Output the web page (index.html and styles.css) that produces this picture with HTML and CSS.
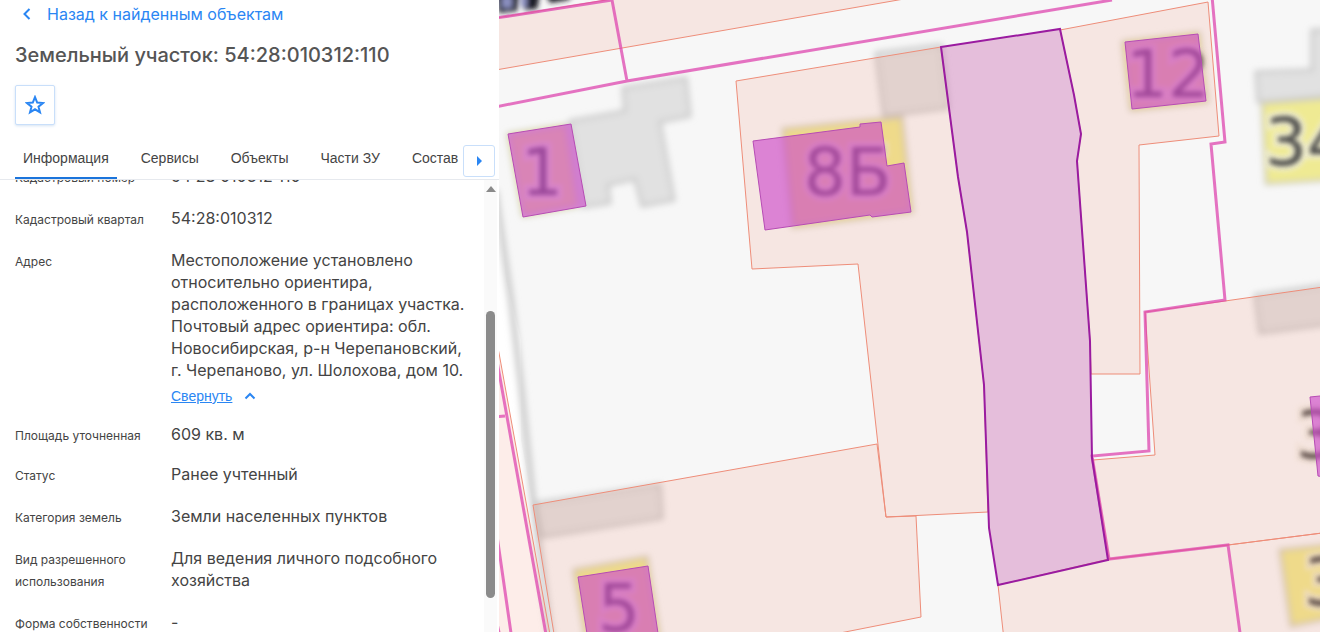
FILE: index.html
```html
<!DOCTYPE html>
<html lang="ru">
<head>
<meta charset="utf-8">
<meta name="viewport" content="width=device-width, initial-scale=1">
<title>Земельный участок: 54:28:010312:110</title>
<link rel="stylesheet" href="styles.css">
</head>
<body>
<div class="layout">
  <aside class="panel">
    <header class="panel-head">
      <a class="back" href="#results">
        <svg class="back-icon" viewBox="0 0 10 12" aria-hidden="true"><path d="M7.500 1 2.500 6 7.500 11"/></svg>
        Назад к найденным объектам
      </a>
      <h1 class="title">Земельный участок: 54:28:010312:110</h1>
      <button class="icon-button favorite" type="button" aria-label="В избранное">
        <svg class="star" viewBox="0 0 20 20" aria-hidden="true"><path d="M10 2.1 12.2 7.6 18 8 13.5 11.7 15 17.4 10 14.3 5 17.4 6.5 11.7 2 8 7.8 7.6Z"/></svg>
      </button>
    </header>
    <nav class="tabs">
      <button class="tab active" type="button">Информация</button>
      <button class="tab" type="button">Сервисы</button>
      <button class="tab" type="button">Объекты</button>
      <button class="tab" type="button">Части ЗУ</button>
      <button class="tab last" type="button">Состав</button>
      <button class="icon-button next" type="button" aria-label="Следующие вкладки">
        <svg class="next-icon" viewBox="0 0 6 10" aria-hidden="true"><path d="M1 0 6 5 1 10Z"/></svg>
      </button>
    </nav>
    <div class="scroll">
      <dl class="facts">
        <div class="fact"><dt>Кадастровый номер</dt><dd>54:28:010312:110</dd></div>
        <div class="fact"><dt>Кадастровый квартал</dt><dd>54:28:010312</dd></div>
        <div class="fact tight"><dt>Адрес</dt><dd>Местоположение установлено относительно ориентира, расположенного в границах участка. Почтовый адрес ориентира: обл. Новосибирская, р-н Черепановский, г. Черепаново, ул. Шолохова, дом 10.
          <a class="collapse" href="#address"><span>Свернуть</span><svg class="collapse-icon" viewBox="0 0 12 8" aria-hidden="true"><path d="M1.5 6.5 6 2 10.5 6.5"/></svg></a></dd></div>
        <div class="fact tight"><dt>Площадь уточненная</dt><dd>609 кв. м</dd></div>
        <div class="fact"><dt>Статус</dt><dd>Ранее учтенный</dd></div>
        <div class="fact"><dt>Категория земель</dt><dd>Земли населенных пунктов</dd></div>
        <div class="fact"><dt>Вид разрешенного использования</dt><dd>Для ведения личного подсобного хозяйства</dd></div>
        <div class="fact"><dt>Форма собственности</dt><dd>-</dd></div>
      </dl>
      <div class="scrollbar" aria-hidden="true">
        <svg class="scroll-up" viewBox="0 0 10 6"><path d="M0 6 5 0 10 6Z"/></svg>
        <div class="scroll-before"></div>
        <div class="scroll-thumb"></div>
        <div class="scroll-after"></div>
      </div>
    </div>
  </aside>
  <main class="map">
    <svg class="map-canvas" viewBox="499 0 821 632" preserveAspectRatio="xMinYMin slice" role="img" aria-label="Кадастровая карта">
      <defs>
        <filter id="soft" x="-20%" y="-20%" width="140%" height="140%"><feGaussianBlur stdDeviation="3"/></filter>
        <filter id="soft-text" x="-20%" y="-20%" width="140%" height="140%"><feGaussianBlur stdDeviation="2.4"/></filter>
      </defs>
      <path class="verge" d="M499 200 506 280 521 340V440L533 505 553 632H499Z"/>
      <g filter="url(#soft)">
        <path class="road-edge" d="M495 190 511 300 521 385 533 500 551 640"/>
        <path class="grey" d="M570 121 625 111 623 88 686 78 690 116 660 122 674 200 642 206 635 179 608 185 610 203 583 207Z"/>
        <path class="grey" d="M876 53 941 45 948 108 884 116Z"/>
        <path class="grey" d="M536 503 660 485 662 518 542 537Z"/>
        <path class="grey" d="M1256 72 1312 70 1312 30 1330 30 1330 96 1258 102Z"/>
        <path class="grey" d="M1255 295 1330 284 1330 324 1260 333Z"/>
        <path class="yellow" d="M508 134 566 125 578 206 523 216Z"/>
        <path class="yellow" d="M783 129 902 117 912 212 793 227Z"/>
        <path class="yellow" d="M1123 42 1199 33 1207 102 1131 110Z"/>
        <path class="yellow" d="M1262 103 1330 98 1330 180 1266 184Z"/>
        <path class="yellow" d="M574 570 647 557 660 640 586 640Z"/>
        <path class="yellow" d="M1280 550 1330 545 1330 618 1291 626Z"/>
      </g>
      <g filter="url(#soft-text)">
        <path class="shade" d="M496-6H519L517 11 499 13ZM523-6H540L537 9 524 10Z"/>
        <path class="glint" d="M502-4H512V8H502ZM521-4H527V7H521Z"/>
        <path class="shade" d="M546-6H574L568 0 550 3Z"/>
      </g>
      <g class="halo" filter="url(#soft-text)">
        <text x="521" y="195">1</text><text x="804" y="195">8Б</text><text x="1126" y="97">12</text>
        <text x="1265" y="165">34</text><text x="598" y="631">5</text><text x="1296" y="458">3</text><text x="1304" y="605">3</text>
      </g>
      <g class="numbers" filter="url(#soft-text)">
        <text x="521" y="195">1</text><text x="804" y="195">8Б</text><text x="1126" y="97">12</text>
        <text x="1265" y="165">34</text><text x="598" y="631">5</text><text x="1296" y="458">3</text><text x="1304" y="605">3</text>
      </g>
      <g class="parcels">
        <path d="M490 19 612-1H904L490 71Z"/>
        <path d="M736 81 941 47 958 177 967 232 984 385 988 512 886 517 858 264 752 269Z"/>
        <path d="M1060 30 1208 2 1219 136 1139 145 1140 374 1091 374 1090 341 1077 161 1081 134 1074 95Z"/>
        <path d="M1145 312 1225 301 1330 286V532L1228 545 1109 559 1093 460 1155 455Z"/>
        <path d="M998 585 1109 559 1228 545 1330 532V640H1004Z"/>
        <path d="M533 505 877 444 886 517 916 516 921 617 840 633 824 640H555Z"/>
        <path d="M490 310 499 353 551 640H490Z"/>
      </g>
      <g class="blocks">
        <path d="M490 19 612 0 627 81M490 108 627 81 1112 0"/>
        <path d="M1212-4 1225 142 1211 144 1225 300 1145 312 1149 451 1092 456 1109 559 1228 545 1241 640"/>
        <path d="M490 322 547 640M490 487 512 640M494 417 505 416M494 610 503 650"/>
      </g>
      <g class="buildings">
        <path d="M508 134 571 124 586 206 523 217Z"/>
        <path d="M753 141 860 127 860 124 881 122 887 166 904 163 911 212 872 217 870 215 765 230Z"/>
        <path d="M1125 42 1198 34 1206 101 1132 109Z"/>
        <path d="M578 577 648 566 659 640H588Z"/>
        <path d="M1310 397 1330 395V478L1318 476Z"/>
      </g>
      <path class="selected" d="M941 47 1060 29 1074 95 1081 134 1077 161 1090 341 1092 458 1108 560 998 585 989 528 984 385 967 232 958 177Z"/>
    </svg>
  </main>
</div>
</body>
</html>
```
FILE: styles.css
```css
* { box-sizing: border-box; }

body {
  margin: 0;
  font-family: Inter, "Noto Sans", sans-serif;
  color: #444;
  background: #fff;
}

.layout {
  display: grid;
  grid-template-columns: minmax(320px, 499px) minmax(0, 1fr);
  height: 100vh;
  overflow: hidden;
}

.panel {
  display: flex;
  flex-direction: column;
  min-height: 0;
  min-width: 0;
}

.panel-head {
  display: flex;
  flex-direction: column;
  align-items: flex-start;
  padding: 4px 15px 0;
}

.back {
  display: flex;
  align-items: center;
  gap: 15px;
  padding-left: 7px;
  font-size: 16px;
  line-height: 20px;
  color: #2a86f3;
  text-decoration: none;
}

.back-icon {
  width: 10px;
  height: 12px;
  fill: none;
  stroke: currentColor;
  stroke-width: 2;
}

.title {
  margin: 17px 0 16px;
  font-size: 20px;
  line-height: 28px;
  font-weight: 500;
  color: #555;
}

button {
  margin: 0;
  padding: 0;
  border: 0;
  background: none;
  font: inherit;
  color: inherit;
}

.icon-button {
  display: flex;
  align-items: center;
  justify-content: center;
  background: #fff;
  border: 1px solid #c9dffa;
  border-radius: 2px;
}

.favorite {
  width: 40px;
  height: 40px;
  box-shadow: 0 1px 3px #d5e3f3;
}

.star {
  width: 20px;
  height: 20px;
  fill: none;
  stroke: #2a86f3;
  stroke-width: 2;
}

.tabs {
  display: flex;
  align-items: center;
  height: 55px;
  padding: 0 4px 0 15px;
  border-bottom: 1px solid #e6e9ee;
}

.tab {
  flex: none;
  height: 54px;
  margin-right: 16px;
  padding: 14px 8px 0;
  font-family: "Liberation Sans", Arial, sans-serif;
  font-size: 14px;
  line-height: 20px;
  border-bottom: 2px solid transparent;
}

.tab.last {
  margin-right: 0;
  padding-right: 0;
}

.tab.active { border-bottom-color: #1b74db; }

.next {
  flex: none;
  width: 32px;
  height: 32px;
  margin-left: auto;
  margin-top: 18px;
  border-radius: 3px;
}

.next-icon {
  width: 6px;
  height: 10px;
  fill: #2a86f3;
}

.scroll {
  flex: 1;
  display: flex;
  min-height: 0;
  overflow: hidden;
}

.facts {
  flex: 1;
  min-width: 0;
  margin: -15px 0 0;
  padding: 0 15px;
}

.fact {
  display: grid;
  grid-template-columns: 140px minmax(0, 1fr);
  column-gap: 16px;
  align-items: baseline;
  margin-bottom: 18px;
  line-height: 22px;
}

.fact.tight { margin-bottom: 16px; }

.fact dt { font-size: 12px; }

.fact dd {
  margin: 0;
  font-size: 16px;
}

.collapse {
  display: flex;
  align-items: center;
  gap: 12px;
  margin-top: 4px;
  font-family: "Liberation Sans", Arial, sans-serif;
  font-size: 14px;
  line-height: 22px;
  color: #2a86f3;
  text-decoration: none;
}

.collapse span { text-decoration: underline; }

.collapse-icon {
  width: 12px;
  height: 8px;
  fill: none;
  stroke: currentColor;
  stroke-width: 2;
}

.scrollbar {
  flex: none;
  display: flex;
  flex-direction: column;
  align-items: center;
  width: 13px;
  margin-right: 2px;
  padding: 6px 0 0;
  background: #fafafa;
}

.scroll-up {
  flex: none;
  width: 10px;
  height: 6px;
  fill: #8a8a8a;
}

.scroll-before { flex: 119; }

.scroll-thumb {
  flex: 287;
  width: 9px;
  border-radius: 5px;
  background: #8b8b8b;
}

.scroll-after { flex: 34; }

.map {
  min-width: 0;
  min-height: 0;
  overflow: hidden;
  background: #f7f7f7;
}

.map-canvas {
  display: block;
  width: 100%;
  height: 100%;
}

.verge { fill: #fff; }
.road-edge { fill: none; stroke: #cbcbcb; stroke-width: 6; }
.grey { fill: #e1e1e1; stroke: #c6c6c6; stroke-width: 3; }
.yellow { fill: #efea93; stroke: #cfcdbb; stroke-width: 3; }
.shade { fill: #1d1a26; }
.glint { fill: #8b90c0; }

.halo,
.numbers {
  font-family: "DejaVu Sans", sans-serif;
  font-size: 66px;
}

.halo { fill: none; stroke: #f0eee4; stroke-width: 10; opacity: .7; }
.numbers { fill: #4a4a4a; }

.parcels {
  fill: rgb(240 110 70 / 12%);
  stroke: #ee8d79;
  stroke-width: 1;
}

.blocks {
  fill: none;
  stroke: rgb(222 70 175 / 75%);
  stroke-width: 3;
}

.buildings {
  fill: rgb(203 70 203 / 62%);
  stroke: #b64cb4;
  stroke-width: 1;
}

.selected {
  fill: rgb(198 92 170 / 37%);
  stroke: #9a1ba0;
  stroke-width: 2;
}
```
